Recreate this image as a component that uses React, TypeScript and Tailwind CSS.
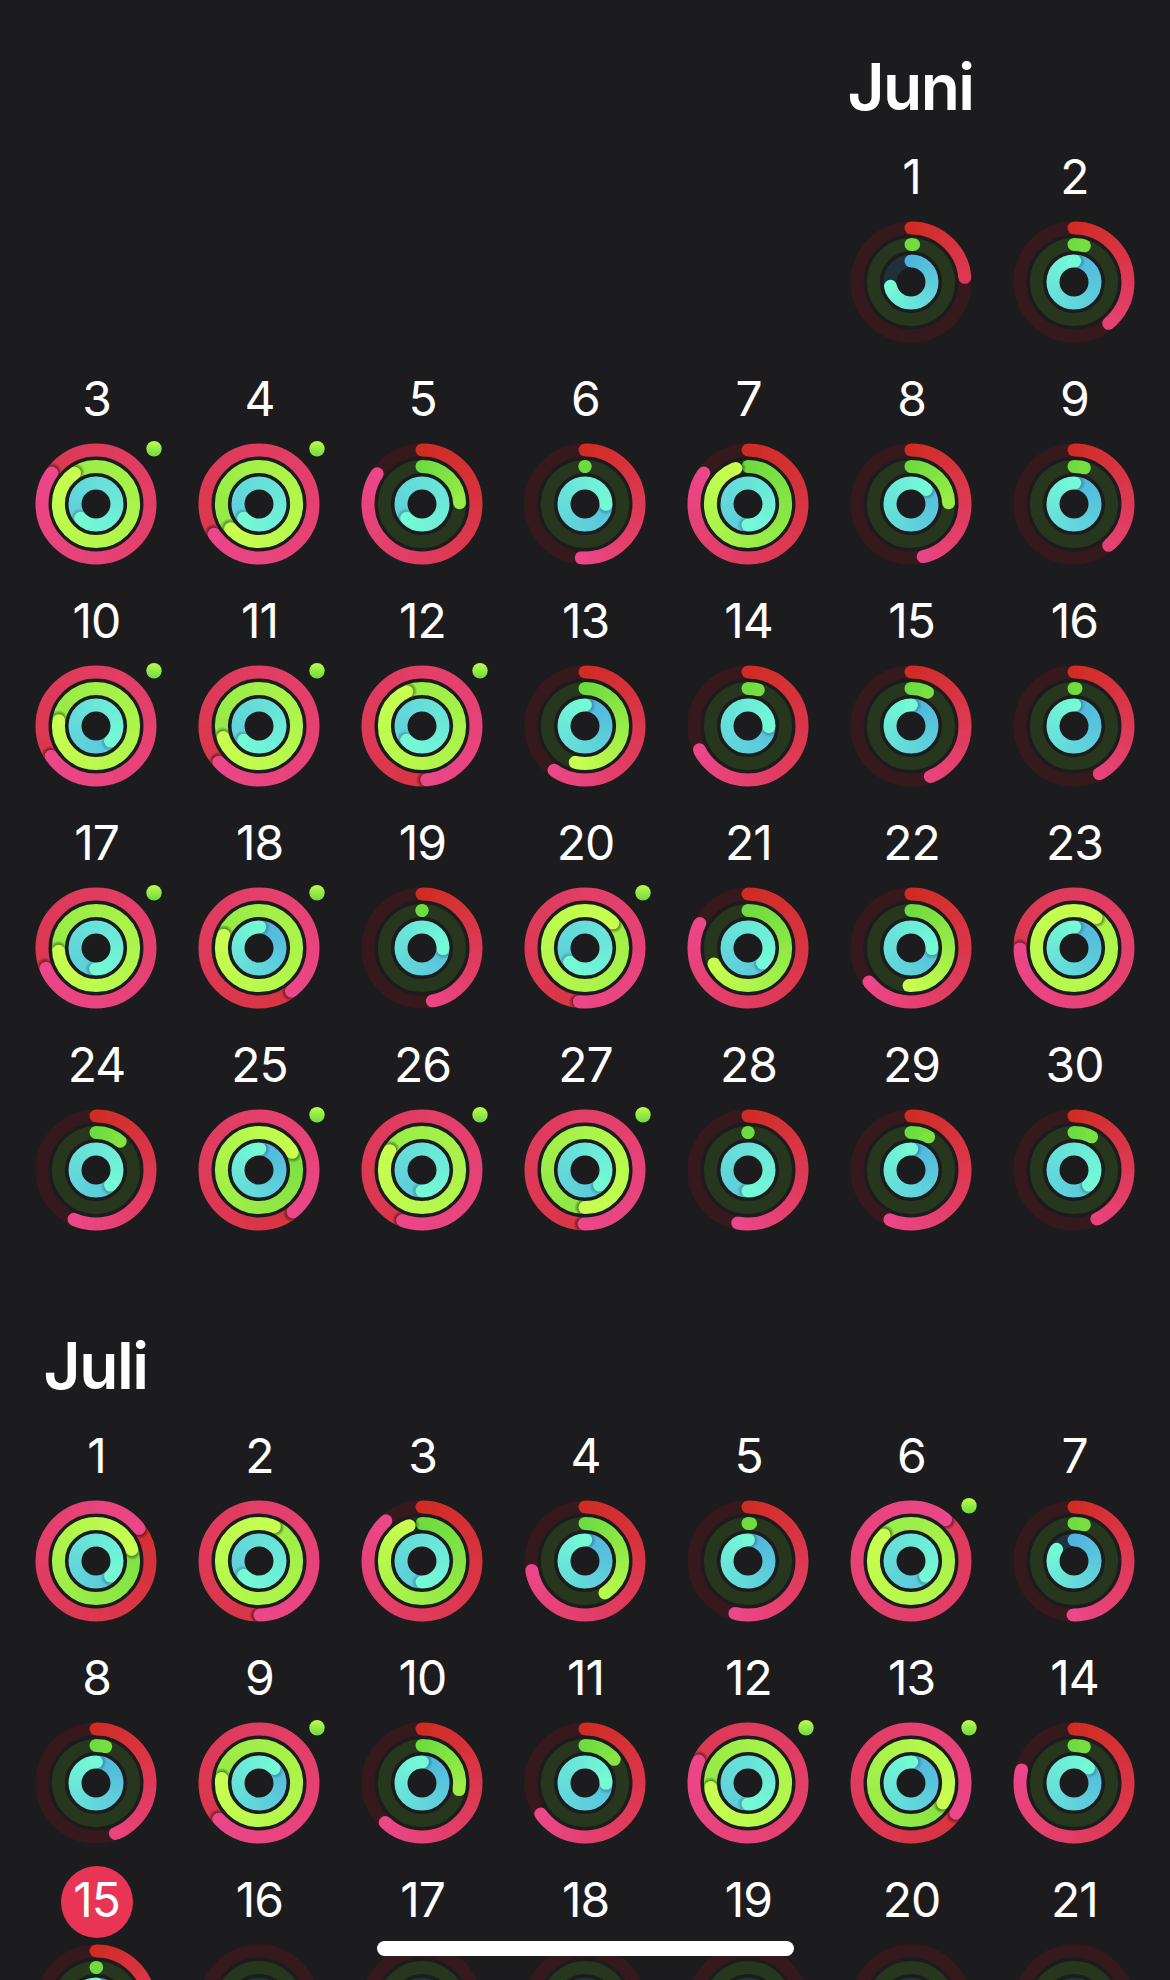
import React from 'react';

type RGB = [number, number, number];

interface Day {
  day: number;
  // Sweep of each ring in degrees: move, exercise, stand. 360 is a closed ring.
  rings?: [number, number, number];
  workout?: boolean;
  today?: boolean;
}

interface Month {
  name: string;
  startColumn: number;
  days: Day[];
}

const june: Day[] = [
  { day: 1, rings: [85, 4, 258] },
  { day: 2, rings: [140, 16, 362] },
  { day: 3, rings: [665, 685, 587], workout: true },
  { day: 4, rings: [596, 589, 587], workout: true },
  { day: 5, rings: [304, 88, 587] },
  { day: 6, rings: [184, 0, 451] },
  { day: 7, rings: [305, 341, 540] },
  { day: 8, rings: [167, 88, 406] },
  { day: 9, rings: [140, 16, 362] },
  { day: 10, rings: [596, 638, 496], workout: true },
  { day: 11, rings: [588, 612, 587], workout: true },
  { day: 12, rings: [535, 696, 587], workout: true },
  { day: 13, rings: [215, 195, 361] },
  { day: 14, rings: [244, 16, 452] },
  { day: 15, rings: [159, 26, 361] },
  { day: 16, rings: [152, 3, 362] },
  { day: 17, rings: [608, 625, 541], workout: true },
  { day: 18, rings: [503, 650, 362], workout: true },
  { day: 19, rings: [169, 0, 452] },
  { day: 20, rings: [546, 768, 587], workout: true },
  { day: 21, rings: [297, 245, 496] },
  { day: 22, rings: [231, 183, 452] },
  { day: 23, rings: [629, 1116, 362] },
  { day: 24, rings: [204, 40, 496] },
  { day: 25, rings: [501, 422, 362], workout: true },
  { day: 26, rings: [561, 661, 540], workout: true },
  { day: 27, rings: [541, 540, 496], workout: true },
  { day: 28, rings: [191, 0, 540] },
  { day: 29, rings: [203, 28, 362] },
  { day: 30, rings: [155, 28, 496] },
];

const july: Day[] = [
  { day: 1, rings: [413, 432, 496] },
  { day: 2, rings: [539, 744, 587] },
  { day: 3, rings: [318, 340, 540] },
  { day: 4, rings: [260, 148, 362] },
  { day: 5, rings: [194, 4, 361] },
  { day: 6, rings: [760, 674, 496], workout: true },
  { day: 7, rings: [181, 16, 304] },
  { day: 8, rings: [159, 15, 361] },
  { day: 9, rings: [588, 637, 406], workout: true },
  { day: 10, rings: [223, 100, 361] },
  { day: 11, rings: [235, 51, 451] },
  { day: 12, rings: [654, 623, 540], workout: true },
  { day: 13, rings: [484, 482, 362], workout: true },
  { day: 14, rings: [284, 16, 404] },
  { day: 15, rings: [140, 1, 361], today: true },
  { day: 16 },
  { day: 17 },
  { day: 18 },
  { day: 19 },
  { day: 20 },
  { day: 21 },
];

const months: Month[] = [
  { name: 'Juni', startColumn: 6, days: june },
  { name: 'Juli', startColumn: 1, days: july },
];

const STROKE = 13;
const STEP = 5;

const ringStyles: { radius: number; track: string; from: RGB; to: RGB; shadow: number }[] = [
  { radius: 54, track: '#36191c', from: [208, 44, 36], to: [235, 71, 137], shadow: 0.42 },
  { radius: 37.6, track: '#26371e', from: [110, 219, 64], to: [200, 255, 80], shadow: 0.38 },
  { radius: 21, track: '#1f323b', from: [80, 180, 222], to: [117, 250, 214], shadow: 0.2 },
];

const columnStarts: Record<number, string> = {
  1: 'col-start-1',
  6: 'col-start-6',
};

const mix = (from: RGB, to: RGB, t: number) =>
  `rgb(${from.map((c, i) => Math.round(c + (to[i] - c) * t)).join(',')})`;

const point = (radius: number, deg: number): [number, number] => {
  const a = (deg * Math.PI) / 180;
  return [radius * Math.sin(a), -radius * Math.cos(a)];
};

const arc = (radius: number, start: number, end: number) => {
  const [x1, y1] = point(radius, start);
  const [x2, y2] = point(radius, end);
  return `M${x1.toFixed(3)} ${y1.toFixed(3)}A${radius} ${radius} 0 0 1 ${x2.toFixed(3)} ${y2.toFixed(3)}`;
};

const Ring = ({ index, sweep }: { index: number; sweep?: number }) => {
  const { radius, track, from, to, shadow } = ringStyles[index];
  const trackCircle = <circle r={radius} fill="none" stroke={track} strokeWidth={STROKE} />;

  if (sweep === undefined) return trackCircle;

  // Short rings only reach part of the gradient
  const reach = Math.min(1, sweep / 180);
  const colorAt = (deg: number) => mix(from, to, sweep ? (deg / sweep) * reach : 0);

  // Only the last lap is visible
  const first = Math.max(0, sweep - 360);
  const starts: number[] = [];
  for (let d = first; d < sweep; d += STEP) starts.push(d);

  // Segments overlap a little and are wider than the band, whose mask keeps the edges smooth
  const overlap = 110 / radius;
  const segments = starts.map((d) => (
    <path
      key={d}
      d={arc(radius, d, Math.min(sweep, d + STEP + overlap))}
      fill="none"
      stroke={colorAt(Math.min(sweep, d + STEP / 2))}
      strokeWidth={STROKE + 2}
    />
  ));

  const [tipX, tipY] = point(radius, sweep);
  const [shadowX, shadowY] = point(radius, sweep + 100 / radius);

  return (
    <>
      {sweep < 360 && trackCircle}
      <g mask={`url(#band-${index})`}>
        {first === 0 && <circle cy={-radius} r={STROKE / 2} fill={colorAt(0)} />}
        {segments}
        {sweep > 330 && (
          <>
            <circle cx={shadowX} cy={shadowY} r={9} fill="url(#tip-shadow)" opacity={shadow} />
            {/* The tail is drawn again so the shadow only falls ahead of the tip */}
            {segments.slice(-9)}
          </>
        )}
        <circle cx={tipX} cy={tipY} r={STROKE / 2} fill={colorAt(sweep)} />
      </g>
    </>
  );
};

const ActivityRings = ({ rings, workout }: Pick<Day, 'rings' | 'workout'>) => (
  <svg width="163" height="138" viewBox="-82 -67 163 138" className="block">
    {ringStyles.map((_, i) => (
      <Ring key={i} index={i} sweep={rings?.[i]} />
    ))}
    {workout && <circle cx="58" cy="-55.3" r="7.7" fill="url(#workout-dot)" />}
  </svg>
);

const SharedDefs = () => (
  <svg width="0" height="0" className="absolute">
    <defs>
      <radialGradient id="tip-shadow">
        <stop offset="0.6" stopColor="#000" />
        <stop offset="1" stopColor="#000" stopOpacity="0" />
      </radialGradient>
      <linearGradient id="workout-dot" x1="0" y1="0" x2="0" y2="1">
        <stop offset="0" stopColor="#bffa4d" />
        <stop offset="1" stopColor="#6edb40" />
      </linearGradient>
      {ringStyles.map(({ radius }, i) => (
        <mask key={i} id={`band-${i}`} maskUnits="userSpaceOnUse" x="-70" y="-66" width="140" height="132">
          <circle r={radius} fill="none" stroke="#fff" strokeWidth={STROKE} />
        </mask>
      ))}
    </defs>
  </svg>
);

const DayCell = ({ day, rings, workout, today, className = '' }: Day & { className?: string }) => (
  <div className={className}>
    <div className="flex h-[84px] justify-center pl-0.5 pt-3">
      <span
        className={`flex size-[72px] items-center justify-center rounded-full pb-1 text-[48px] font-[370] leading-none tracking-[-1px] ${
          today ? 'bg-[#e93555]' : ''
        }`}
      >
        {day}
      </span>
    </div>
    <ActivityRings rings={rings} workout={workout} />
  </div>
);

const MonthSection = ({ name, startColumn, days }: Month) => (
  <section className="grid grid-cols-[repeat(7,163px)] pl-3.5">
    <h2
      className={`${columnStarts[startColumn]} pb-3 text-center text-[64px] font-semibold leading-none tracking-[-1.5px]`}
    >
      {name}
    </h2>
    <div className="col-span-7 grid grid-cols-subgrid">
      {days.map((d, i) => (
        <DayCell key={d.day} {...d} className={i === 0 ? columnStarts[startColumn] : ''} />
      ))}
    </div>
  </section>
);

const App = () => (
  <main className="relative h-[1980px] w-[1170px] overflow-hidden bg-[#1c1c1e] pt-[55px] font-['Inter',sans-serif] text-white">
    <SharedDefs />
    <div className="flex flex-col gap-[93px]">
      {months.map((month) => (
        <MonthSection key={month.name} {...month} />
      ))}
    </div>

    {/* Home indicator */}
    <div className="absolute bottom-6 left-[377px] h-[15px] w-[417px] rounded-full bg-white" />
  </main>
);

export default App;
